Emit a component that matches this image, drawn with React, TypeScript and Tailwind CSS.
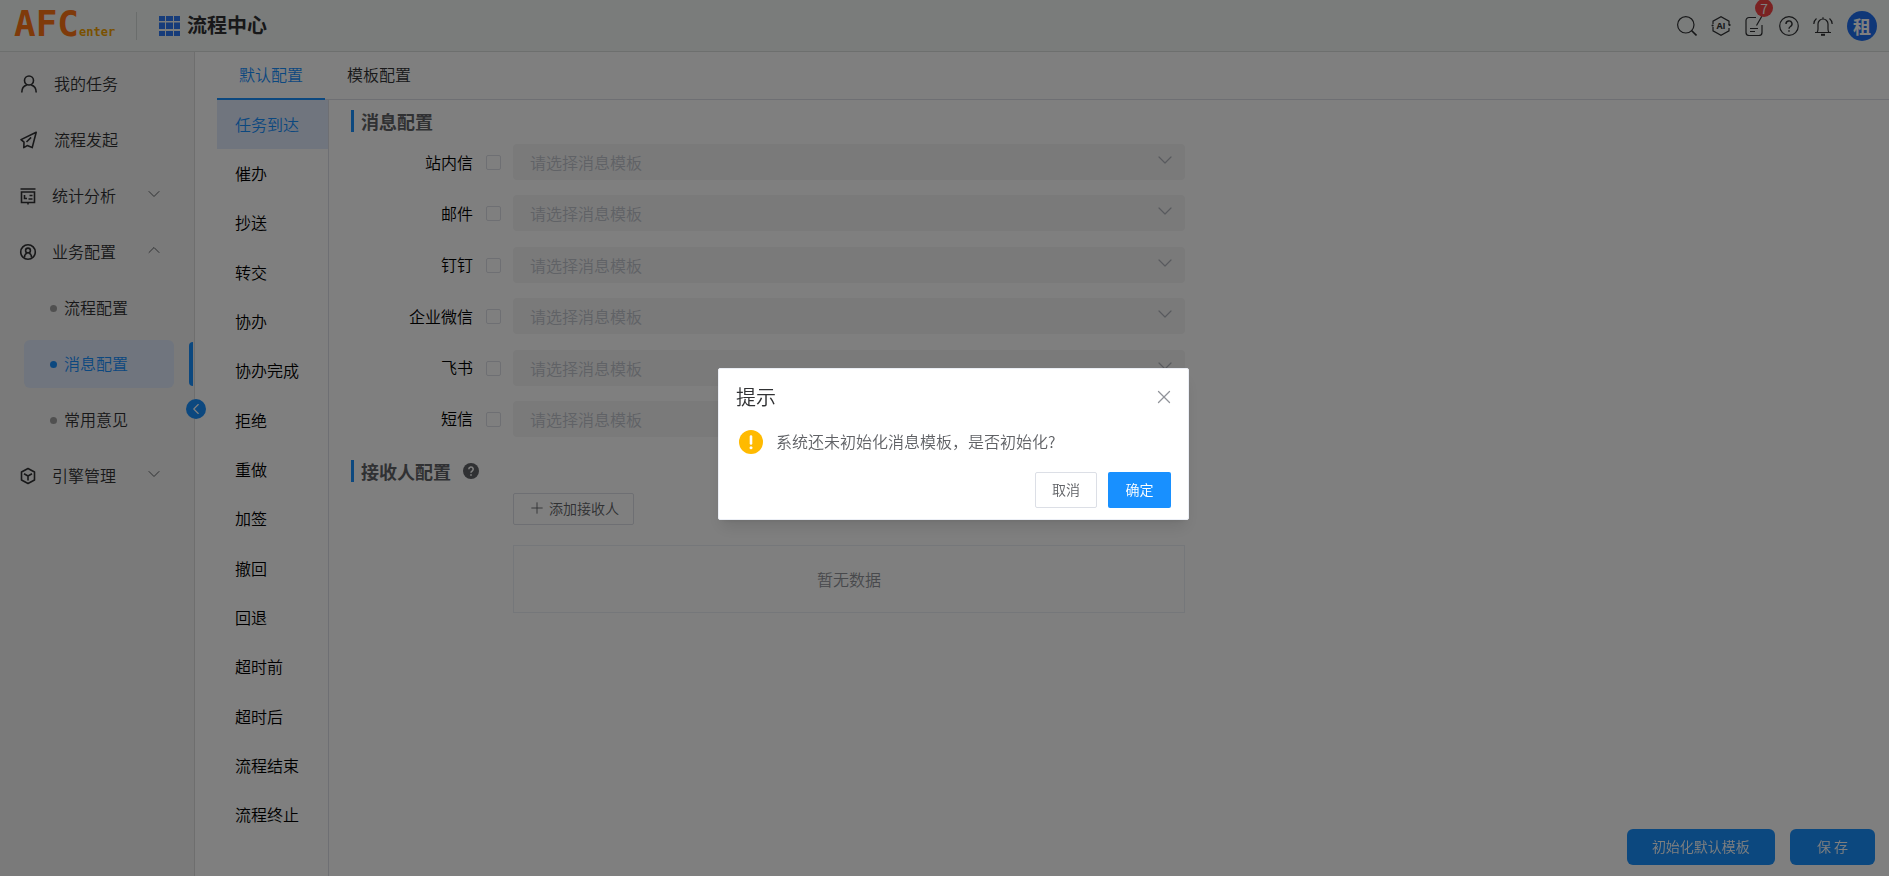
import { Fragment } from "react";
import { LuChevronDown, LuChevronLeft, LuChevronUp, LuPlus, LuX } from "react-icons/lu";

type MenuItem = {
	label: string;
	icon: React.ReactNode;
	open?: boolean;
	children?: string[];
};

const Icon = ({ children }: { children: React.ReactNode }) => (
	<svg viewBox="0 0 18 18" className="size-[18px] shrink-0" fill="none" stroke="currentColor" strokeWidth="1.6" aria-hidden="true">
		{children}
	</svg>
);

const HeaderIcon = ({ children }: { children: React.ReactNode }) => (
	<svg viewBox="0 0 20 20" className="size-5" fill="none" stroke="currentColor" strokeWidth="1.2" aria-hidden="true">
		{children}
	</svg>
);

const menu: MenuItem[] = [
	{
		label: "我的任务",
		icon: (
			<Icon>
				<circle cx="10" cy="5.5" r="4.5" />
				<path d="M2.8 17.5c0-4 2.2-6.6 5-7.4M17.2 17.5c0-4-2.2-6.6-5-7.4" />
			</Icon>
		),
	},
	{
		label: "流程发起",
		icon: (
			<Icon>
				<path d="M17.2 1.2 2 8.6l3 2.6-.2 5.4 3.4-2 5 2zM7.5 11l4.6-4.6" strokeLinejoin="round" />
			</Icon>
		),
	},
	{
		label: "统计分析",
		open: false,
		icon: (
			<Icon>
				<path d="M1.5 2h15M2.5 5h13v10.5h-13zM9 15.5v2M10.5 8.5h3M9.500 12h4M5.5 8v3.5h2.500" />
			</Icon>
		),
	},
	{
		label: "业务配置",
		open: true,
		children: ["流程配置", "消息配置", "常用意见"],
		icon: (
			<Icon>
				<circle cx="9" cy="9" r="7.3" />
				<circle cx="9" cy="7.5" r="2.4" />
				<path d="M5.5 14.5c0-2.6 1-4 2.5-4.6M12.5 14.5c0-2.6-1-4-2.5-4.6" />
			</Icon>
		),
	},
	{
		label: "引擎管理",
		open: false,
		icon: (
			<Icon>
				<path d="M9 1.5 15.5 5v8L9 16.5 2.5 13V5zM5 6.8 9 9l4-2.2M9 9v4.5" strokeLinejoin="round" />
			</Icon>
		),
	},
];

const events = [
	"任务到达", "催办", "抄送", "转交", "协办", "协办完成", "拒绝", "重做",
	"加签", "撤回", "回退", "超时前", "超时后", "流程结束", "流程终止",
];

const channels = ["站内信", "邮件", "钉钉", "企业微信", "飞书", "短信"];

const Header = () => (
	<header className="flex h-[52px] shrink-0 items-center border-b border-[#dadfdd] bg-[#f4f9f7] pr-3 pl-[14px]">
		<div className="flex w-[102px] items-baseline pb-1 font-['DejaVu_Sans_Mono',monospace] font-bold">
			<span className="text-[36px] leading-9 text-[#ff7414]">AFC</span>
			<span className="text-[12px] text-[#f5a300]">enter</span>
		</div>
		<div className="ml-5 h-7 w-px bg-[#d5dad8]" />
		<svg viewBox="0 0 21 20" className="ml-[22px] h-5 w-[21px]" fill="#2d78f4" aria-hidden="true">
			<path d="M0 0h6v5H0zM7 0h7v5H7zM15 0h6v5h-6zM0 6.500h6V13H0zM7 6.500h7V13H7zM15 6.500h6V13h-6zM0 15h6v5H0zM7 15h7v5H7zM15 15h6v5h-6z" />
		</svg>
		<h1 className="ml-[7px] pb-0.5 text-xl font-bold text-[#303133]">流程中心</h1>
		<div className="ml-auto flex items-center gap-[14px] text-[#303133]">
			<button aria-label="搜索">
				<HeaderIcon>
					<path d="m14.5 14.5 5 5" strokeWidth="1.6" />
					<circle cx="8.8" cy="8.8" r="8.2" />
				</HeaderIcon>
			</button>
			<button aria-label="AI">
				<HeaderIcon>
					<path d="M2 8V5.2L10 .7l8 4.500V9M18 12v2.800L10 19.300l-8-4.500V11" />
					<circle cx="1.6" cy="9.5" r="1.1" fill="currentColor" stroke="none" />
					<circle cx="18.6" cy="9" r="1.1" fill="currentColor" stroke="none" />
					<text x="10" y="13" textAnchor="middle" fontSize="9" fontWeight="bold" fill="currentColor" stroke="none" className="font-['Open_Sans',sans-serif]">
						AI
					</text>
				</HeaderIcon>
			</button>
			<button aria-label="待办" className="relative">
				<HeaderIcon>
					<path d="M11 1.5H4a3 3 0 0 0-3 3v12a3 3 0 0 0 3 3h10a3 3 0 0 0 3-3V9M17 0l-5.500 9.500M5 12.500h8M5 15.500h5" />
				</HeaderIcon>
				<span className="absolute -top-[17px] left-[10px] flex size-[18px] items-center justify-center rounded-full bg-[#f54545] text-sm text-white">
					7
				</span>
			</button>
			<button aria-label="帮助">
				<HeaderIcon>
					<circle cx="10" cy="10" r="9.3" />
					<path d="M7 8a3 3 0 1 1 4.500 2.500c-1 .6-1.500 1-1.500 2.300M10 14.300v1.500" strokeWidth="1.4" />
				</HeaderIcon>
			</button>
			<button aria-label="通知">
				<HeaderIcon>
					<path d="M2 16.500h16M4 16.500c.8-1 1-2 1-3.500V8a5 5 0 0 1 10 0v5c0 1.500.2 2.500 1 3.500M10 3V1.200M.8 8Q1 4.500 3.500 2.500M19.200 8Q19 4.500 16.500 2.500" />
					<path d="M8 18.800h4" strokeWidth="2" />
				</HeaderIcon>
			</button>
			<button className="size-[30px] rounded-full bg-[#1f6ff0] text-lg leading-[30px] font-bold text-white">租</button>
		</div>
	</header>
);

const Sidebar = () => (
	<nav className="relative w-[195px] shrink-0 border-r border-[#dcdcdc] bg-[#f5f5f5] pt-1 text-[#303133]">
		{menu.map(({ label, icon, open, children }) => (
			<Fragment key={label}>
				<a href="#" className="flex h-14 items-center pl-[19px]">
					{icon}
					<span className={open === undefined ? "ml-[17px] pb-0.5" : "ml-[15px] pb-0.5"}>{label}</span>
					{open !== undefined && (
						<span className="mr-[30px] mb-1 ml-auto text-[#606266]">
							{open ? <LuChevronUp className="size-5" strokeWidth={1.2} /> : <LuChevronDown className="size-5" strokeWidth={1.2} />}
						</span>
					)}
				</a>
				{children?.map((child) => {
					const active = child === "消息配置";
					return (
						<div key={child} className="flex h-14 items-center justify-between pr-px pl-6">
							<a
								href="#"
								className={
									active
										? "flex h-12 w-[150px] items-center gap-[7px] rounded-md bg-[#e0ebfc] pl-[26px] text-[#1890ff]"
										: "flex h-12 w-[150px] items-center gap-[7px] pl-[26px]"
								}
							>
								<i className={active ? "size-[7px] rounded-full bg-[#1890ff]" : "size-[7px] rounded-full bg-[#a0a0a0]"} />
								<span className="pb-0.5">{child}</span>
							</a>
							{active && <i className="h-11 w-1 rounded-l-sm bg-[#1890ff]" />}
						</div>
					);
				})}
			</Fragment>
		))}
		<button
			aria-label="收起菜单"
			className="absolute top-[347px] -right-3 flex size-5 items-center justify-center rounded-full bg-[#1890ff] text-white"
		>
			<LuChevronLeft className="size-[18px]" strokeWidth={1.5} />
		</button>
	</nav>
);

const SectionTitle = ({ children }: { children: React.ReactNode }) => (
	<h2 className="flex h-[22px] items-center border-l-[3px] border-[#1890ff] pl-[7px] text-lg font-bold text-[#606266]">{children}</h2>
);

const MessageForm = () => (
	<form className="min-w-0 flex-1 pt-[10px] pl-[22px]">
		<SectionTitle>消息配置</SectionTitle>
		<div className="mt-3 flex h-[293px] max-w-[834px] flex-col justify-between">
			{channels.map((channel, i) => (
				<div key={channel} className="flex items-center">
					<label htmlFor={`channel-${i}`} className="w-[122px] pb-px text-right text-black">
						{channel}
					</label>
					<input
						id={`channel-${i}`}
						type="checkbox"
						className="mt-px mr-3 ml-[13px] size-[15px] shrink-0 appearance-none rounded-xs border border-[#dcdfe6]"
					/>
					<div className="relative flex-1">
						<select
							disabled
							aria-label={`${channel}消息模板`}
							className="h-9 w-full appearance-none rounded-sm bg-[#f5f5f5] pl-[17px] text-[#c0c4cc] opacity-100"
						>
							<option>请选择消息模板</option>
						</select>
						<LuChevronDown className="absolute top-1 right-2 size-6 text-[#b0b4bc]" strokeWidth={1.2} />
					</div>
				</div>
			))}
		</div>
		<div className="mt-[23px]">
			<SectionTitle>
				接收人配置
				<svg viewBox="0 0 16 16" className="ml-3 size-4" aria-hidden="true">
					<circle cx="8" cy="8" r="8" fill="#606266" />
					<path d="M5.8 6.200a2.200 2.200 0 1 1 3.200 2c-.7.4-1 .7-1 1.500M8 11.200v1.600" fill="none" stroke="#fff" strokeWidth="1.6" />
				</svg>
			</SectionTitle>
		</div>
		<div className="mt-[11px] max-w-[834px] pl-[162px]">
			<button type="button" className="flex h-8 items-center gap-[3px] rounded-xs border border-[#dcdfe6] px-3.5 pb-0.5 text-sm text-[#606266]">
				<LuPlus className="size-[18px]" strokeWidth={1.2} />
				添加接收人
			</button>
			<div className="mt-5 flex h-[68px] items-center justify-center border border-[#ebeef5] text-[#909399]">暂无数据</div>
		</div>
	</form>
);

const ConfirmDialog = () => (
	<div className="fixed inset-0 flex items-center justify-center bg-black/50 pt-3 pl-[18px]">
		<div
			role="dialog"
			aria-labelledby="confirm-title"
			className="w-[471px] rounded-xs border border-[#ebeef5] bg-white px-[17px] pt-3 pb-[11px] text-[#606266] shadow-lg"
		>
			<div className="flex items-center justify-between">
				<h2 id="confirm-title" className="text-xl leading-8 text-[#303133]">
					提示
				</h2>
				<button aria-label="关闭" className="-mr-1 text-[#909399]">
					<LuX className="size-[22px]" strokeWidth={1.4} />
				</button>
			</div>
			<div className="mt-4 flex items-center gap-[13px] pl-[3px]">
				<svg viewBox="0 0 24 24" className="size-6" aria-hidden="true">
					<circle cx="12" cy="12" r="12" fill="#ffba00" />
					<path d="M12 6.5v7" stroke="#fff" strokeWidth="2.6" strokeLinecap="round" />
					<circle cx="12" cy="17.8" r="1.5" fill="#fff" />
				</svg>
				<p className="pb-0.5">系统还未初始化消息模板，是否初始化?</p>
			</div>
			<div className="mt-[17px] flex justify-end gap-[11px] text-sm">
				<button className="h-9 w-[62px] rounded-xs border border-[#dcdfe6] pb-0.5">取消</button>
				<button className="h-9 w-[63px] rounded-xs bg-[#1890ff] pb-0.5 text-white">确定</button>
			</div>
		</div>
	</div>
);

const App = () => {
	return (
		<div className="flex min-h-screen flex-col bg-white font-['Noto_Sans_CJK_SC',sans-serif] text-base font-[350]">
			<Header />
			<div className="flex flex-1">
				<Sidebar />
				<main className="flex min-w-0 flex-1 flex-col pl-[22px]">
					<div className="flex h-12 border-b border-[#dcdfe6] text-[#303133]">
						<button className="-mb-px w-[108px] border-b-2 border-[#1890ff] pb-0.5 text-[#1890ff]">默认配置</button>
						<button className="w-[108px] pb-1">模板配置</button>
					</div>
					<div className="flex flex-1">
						<div className="w-28 shrink-0 border-r border-[#dcdfe6]">
							<ul className="flex h-[740px] flex-col text-black">
								{events.map((event, i) => (
									<li key={event} className="flex-1">
										<button
											className={
												i === 0
													? "size-full bg-[#e0ebfc] pb-0.5 pl-[18px] text-left text-[#1890ff]"
													: "size-full pb-0.5 pl-[18px] text-left"
											}
										>
											{event}
										</button>
									</li>
								))}
							</ul>
						</div>
						<MessageForm />
					</div>
				</main>
			</div>
			<div className="fixed right-[14px] bottom-[11px] flex gap-[15px] text-sm text-white">
				<button className="h-9 rounded-md bg-[#1890ff] px-[25px] pb-0.5">初始化默认模板</button>
				<button className="h-9 rounded-md bg-[#1890ff] px-[27px] pb-0.5">保 存</button>
			</div>
			<ConfirmDialog />
		</div>
	);
};
export default App;
